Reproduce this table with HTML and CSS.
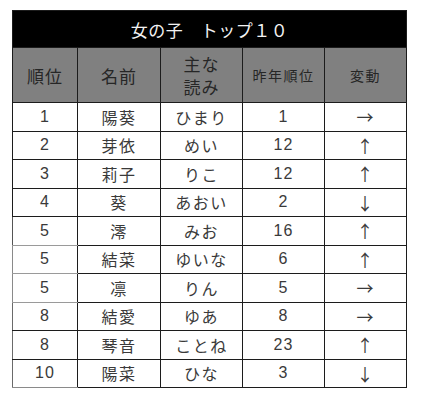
FILE: index.html
```html
<!DOCTYPE html>
<html lang="ja">
<head>
<meta charset="utf-8">
<link rel="stylesheet" href="styles.css">
</head>
<body>
<table class="rank">
  <colgroup>
    <col class="c1"><col class="c2"><col class="c3"><col class="c4"><col class="c5">
  </colgroup>
  <thead>
    <tr class="title"><th colspan="5">女の子　トップ１０</th></tr>
    <tr class="head">
      <th class="big">順位</th>
      <th class="big">名前</th>
      <th class="big">主な<br>読み</th>
      <th class="small">昨年順位</th>
      <th class="small">変動</th>
    </tr>
  </thead>
  <tbody>
    <tr><td>1</td><td>陽葵</td><td>ひまり</td><td>1</td><td>→</td></tr>
    <tr><td>2</td><td>芽依</td><td>めい</td><td>12</td><td>↑</td></tr>
    <tr><td>3</td><td>莉子</td><td>りこ</td><td>12</td><td>↑</td></tr>
    <tr><td>4</td><td>葵</td><td>あおい</td><td>2</td><td>↓</td></tr>
    <tr class="tie-a"><td>5</td><td>澪</td><td>みお</td><td>16</td><td>↑</td></tr>
    <tr class="tie-b"><td>5</td><td>結菜</td><td>ゆいな</td><td>6</td><td>↑</td></tr>
    <tr class="tie-b"><td>5</td><td>凛</td><td>りん</td><td>5</td><td>→</td></tr>
    <tr class="soft"><td>8</td><td>結愛</td><td>ゆあ</td><td>8</td><td>→</td></tr>
    <tr class="soft"><td>8</td><td>琴音</td><td>ことね</td><td>23</td><td>↑</td></tr>
    <tr class="soft last"><td>10</td><td>陽菜</td><td>ひな</td><td>3</td><td>↓</td></tr>
  </tbody>
</table>
</body>
</html>
```

FILE: styles.css
```css
html, body {
  margin: 0;
  padding: 0;
  background: #ffffff;
}

body {
  padding: 10px 0 0 12px;
  font-family: "Liberation Sans", "Noto Sans CJK JP", sans-serif;
}

.rank {
  border-collapse: collapse;
  table-layout: fixed;
  width: 394px;
}

.c1 { width: 65px; }
.c2 { width: 83px; }
.c3 { width: 82px; }
.c4 { width: 82px; }
.c5 { width: 82px; }

.rank th,
.rank td {
  border: 1px solid #1c1c1c;
  padding: 0;
  text-align: center;
  vertical-align: middle;
}

.title th {
  background: #000000;
  color: #f2f2f2;
  height: 36px;
  font-family: "Noto Sans CJK JP", sans-serif;
  font-weight: 400;
  font-size: 17px;
  letter-spacing: 0.5px;
  line-height: 1;
}

.head th {
  background: #808080;
  color: #262626;
  height: 54px;
  font-family: "Noto Sans CJK JP", sans-serif;
  font-weight: 400;
  line-height: 23px;
}

.head .big {
  font-size: 17px;
  letter-spacing: 1px;
}

.head .small {
  font-size: 14px;
  letter-spacing: 1.5px;
}

.rank td {
  height: 27.5px;
  color: #3a3a3a;
  font-size: 16px;
  line-height: 1;
  letter-spacing: 1px;
}

.rank td:nth-child(2),
.rank td:nth-child(3) {
  font-family: "Noto Sans CJK JP", sans-serif;
  font-size: 16px;
  letter-spacing: 1.5px;
}

.rank td:nth-child(5) {
  font-family: "Noto Sans CJK JP", sans-serif;
  font-size: 17px;
}

.tie-a td:first-child {
  border-left-color: #555555;
  border-bottom-color: #9a9a9a;
}

.tie-b td:first-child {
  border-left-color: #8a8a8a;
  border-bottom-color: #9a9a9a;
}

.soft td:first-child {
  border-left-color: #6a6a6a;
}

.last td:first-child {
  border-bottom-color: #8a8a8a;
}
```
